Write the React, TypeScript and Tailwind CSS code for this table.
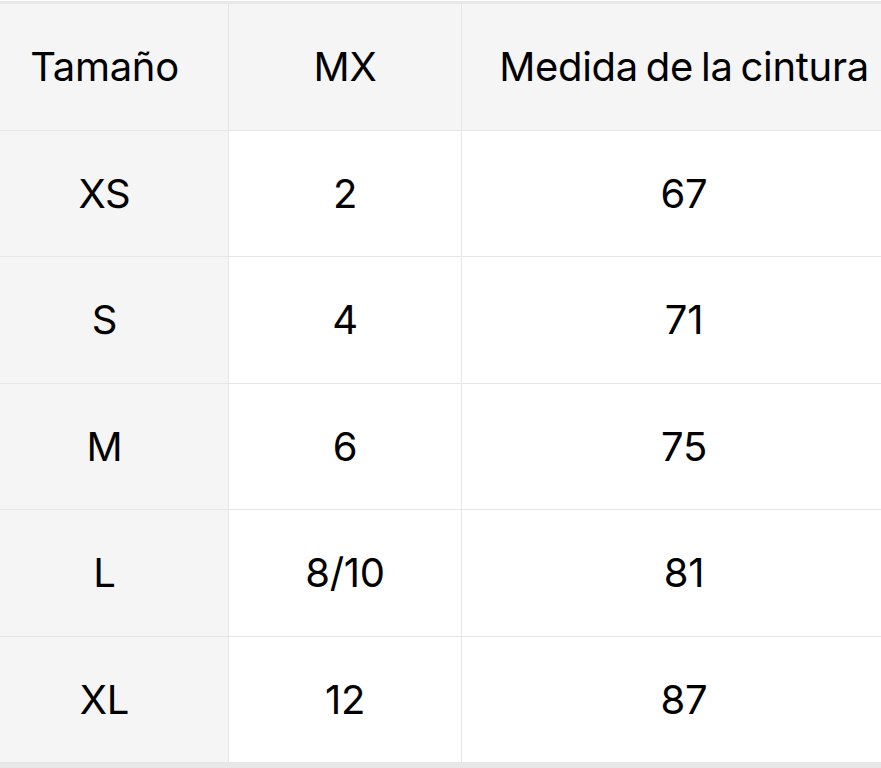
const header = ['Tamaño', 'MX', 'Medida de la cintura']

const rows = [
  { size: 'XS', mx: '2', waist: '67', h: 'h-[126px]' },
  { size: 'S', mx: '4', waist: '71', h: 'h-[127px]' },
  { size: 'M', mx: '6', waist: '75', h: 'h-[126px]' },
  { size: 'L', mx: '8/10', waist: '81', h: 'h-[127px]' },
  { size: 'XL', mx: '12', waist: '87', h: 'h-[126px]' },
]

const grid = 'grid grid-cols-[248px_233px_444px] border-b border-[#e6e6e6]'

export default function App() {
  return (
    <div className="w-[881px] h-[768px] overflow-hidden bg-white pt-px font-['Inter',sans-serif] text-[40px] tracking-[-0.3px] [word-spacing:-3px] text-black">
      <div className="-ml-[19px] w-[925px] border-t-[3px] border-[#e8e8e8]">
        {/* header row */}
        <div className={`${grid} h-[127px] bg-[#f5f5f5]`}>
          {header.map((label, i) => (
            <div
              key={label}
              className={`flex items-center justify-center ${i < 2 ? 'border-r border-[#e6e6e6]' : ''}`}
            >
              {label}
            </div>
          ))}
        </div>

        {rows.map((row) => (
          <div key={row.size} className={`${grid} ${row.h}`}>
            <div className="flex items-center justify-center bg-[#f5f5f5] border-r border-[#e6e6e6]">
              {row.size}
            </div>
            <div className="flex items-center justify-center border-r border-[#e6e6e6]">
              {row.mx}
            </div>
            <div className="flex items-center justify-center">{row.waist}</div>
          </div>
        ))}
        <div className="h-[8px] bg-[#e8e8e8]" />
      </div>
    </div>
  )
}
